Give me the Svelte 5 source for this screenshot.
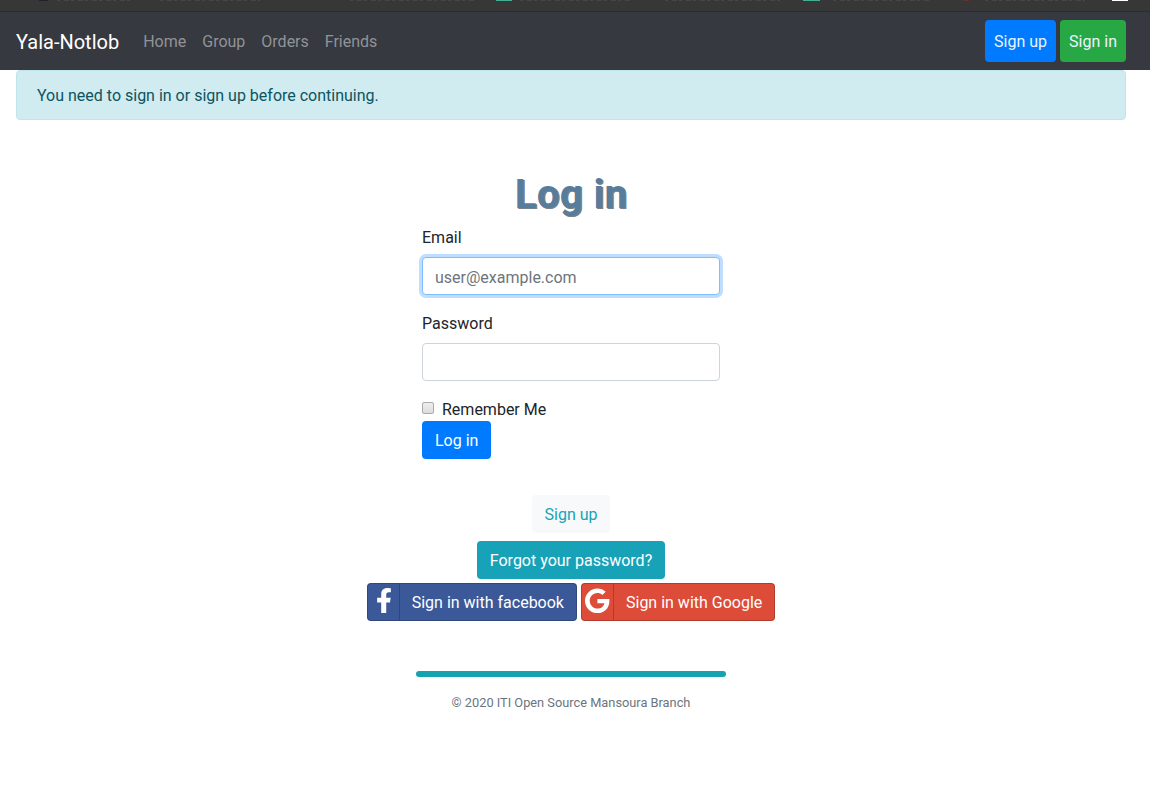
<script>
  const links = ['Home', 'Group', 'Orders', 'Friends'];
  const marks = [
    { x: 39, w: 9, c: '#22222e' }, { x: 496, w: 16, c: '#44ae94' },
    { x: 803, w: 17, c: '#44ae94' }, { x: 963, w: 6, c: '#62332f' },
    { x: 1112, w: 16, c: '#ffffff' }
  ];
</script>

<svg class="browser-edge" width="1150" height="12" viewBox="0 0 1150 12" aria-hidden="true">
  <rect width="1150" height="12" fill="#373737" />
  <path d="M57 .5H132M160 .5H260M350 .5H475M520 .5H630M665 .5H780M833 .5H930M985 .5H1085" stroke="#464646" stroke-dasharray="3 4 5 2" />
  {#each marks as m}
    <rect x={m.x} y="0" width={m.w} height="1" fill={m.c} />
  {/each}
  <rect y="11" width="1150" height="1" fill="#292e31" />
</svg>

<nav>
  <a class="brand" href="#home">Yala-Notlob</a>
  <div class="links">
    {#each links as link}<a href="#{link}">{link}</a>{/each}
  </div>
  <div class="account">
    <a class="blue" href="#signup">Sign up</a>
    <a class="green" href="#signin">Sign in</a>
  </div>
</nav>

<main>
  <div class="alert">You need to sign in or sign up before continuing.</div>
  <h1>Log in</h1>
  <form>
    <label for="email">Email</label>
    <input class="field focus" id="email" type="email" placeholder="user@example.com" />
    <label for="password">Password</label>
    <input class="field" id="password" type="password" />
    <div class="remember">
      <input id="remember" type="checkbox" />
      <label for="remember">Remember Me</label>
    </div>
    <button class="btn blue" type="button">Log in</button>
  </form>

  <a class="btn light" href="#signup">Sign up</a>
  <a class="btn info" href="#forgot">Forgot your password?</a>
  <div class="social">
    <a class="btn facebook" href="#facebook">
      <span class="icon"><svg width="16" height="25.6" viewBox="0 0 320 512"><path d="M279.14 288l14.22-92.66h-88.91v-60.13c0-25.35 12.42-50.06 52.24-50.06h40.42V6.26S260.43 0 225.36 0c-73.22 0-121.08 44.38-121.08 124.72v70.62H22.89V288h81.39v224h100.17V288z" /></svg></span>
      <span>Sign in with facebook</span>
    </a>
    <a class="btn google" href="#google">
      <span class="icon"><svg width="24.4" height="25.6" viewBox="0 0 488 512"><path d="M488 261.8C488 403.3 391.1 504 248 504 110.8 504 0 393.2 0 256S110.8 8 248 8c66.8 0 123 24.5 166.3 64.9l-67.5 64.8C258.5 52.6 94.3 116.6 94.3 256c0 86.5 69.1 156.6 153.7 156.6 98.2 0 135-70.4 140.8-106.9H248v-85.3h236.1c2.3 12.7 3.9 24.9 3.9 41.4z" /></svg></span>
      <span>Sign in with Google</span>
    </a>
  </div>
  <div class="rule"></div>
  <footer>© 2020 ITI Open Source Mansoura Branch</footer>
</main>

<style>
  :global(body) { margin: 0; background: #fff; color: #212529; font: 16px/24px Roboto, sans-serif; }
  :global(*) { box-sizing: border-box; }
  a { text-decoration: none; color: inherit; }
  .browser-edge { display: block; }
  nav { height: 58px; padding: 8px 24px 8px 16px; background: #363940; display: flex; align-items: center; }
  .brand { color: #fff; font-size: 20px; line-height: 30px; margin-right: 16px; padding-top: 2px; }
  .links { display: flex; color: #919397; }
  .links a { padding: 10px 8px 8px; }
  .account { display: flex; gap: 4px; margin-left: auto; color: #e9f5ff; }
  .account a { height: 42px; border: 1px solid transparent; border-radius: 4px; padding: 9px 8px 7px; }
  .blue { background: #007bff; }
  .green { background: #28a745; }
  main { padding: 0 24px 0 16px; display: flex; flex-direction: column; align-items: center; }
  .alert { width: 100%; height: 50px; padding: 13px 20px 11px; border: 1px solid #bee5eb; border-radius: 4px; background: #d1ecf1; color: #0c5460; }
  h1 { margin: 51px 0 6px; font-size: 40px; line-height: 48px; font-weight: 700; letter-spacing: .4px; color: #587d9c; text-shadow: 1px 1px #74838f, 1.5px 1px #858585; }
  form { width: 298px; display: flex; flex-direction: column; }
  form > label { height: 24px; line-height: 24px; padding-top: 1px; margin-bottom: 8px; }
  .field { height: 38px; width: 100%; margin: 0 0 16px; padding: 7px 12px 5px; border: 1px solid #ced4da; border-radius: 4px; font: inherit; outline: none; background: #fff; }
  .field::placeholder { color: #6c757d; opacity: 1; }
  .focus { border-color: #80bdff; box-shadow: 0 0 0 3px #bfdeff; }
  .remember { height: 24px; display: flex; align-items: center; gap: 8px; }
  .remember label { padding-top: 2px; }
  .remember input { appearance: none; width: 12px; height: 12px; margin: 0 0 3px; border: 1px solid #aaa; border-radius: 2px; background: linear-gradient(#eee, #dcdcdc); }
  .btn { height: 38px; padding: 7px 12px 5px; border: 1px solid transparent; border-radius: 4px; color: #fff; font: inherit; }
  form .btn { align-self: flex-start; }
  .light { margin-top: 36px; background: #f8f9fa; color: #17a2b8; }
  .info { margin-top: 8px; background: #17a2b8; }
  .social { display: flex; gap: 4px; margin-top: 4px; }
  .social .btn { display: flex; padding: 0 12px 0 0; line-height: 38px; border-color: rgba(0, 0, 0, .2); }
  .icon { display: flex; align-items: center; justify-content: center; width: 32px; height: 36px; padding-bottom: 3px; margin-right: 12px; border-right: 1px solid rgba(0, 0, 0, .2); }
  .icon svg { flex: none; fill: #fff; }
  .facebook { background: #3b5998; }
  .facebook .icon { padding-left: 1px; }
  .google { background: #dd4b39; }
  .rule { width: 310px; height: 6px; margin-top: 50px; border-radius: 3px; background: #17a2b0; }
  footer { margin-top: 14px; font-size: 12.8px; color: #6c757d; }
</style>
